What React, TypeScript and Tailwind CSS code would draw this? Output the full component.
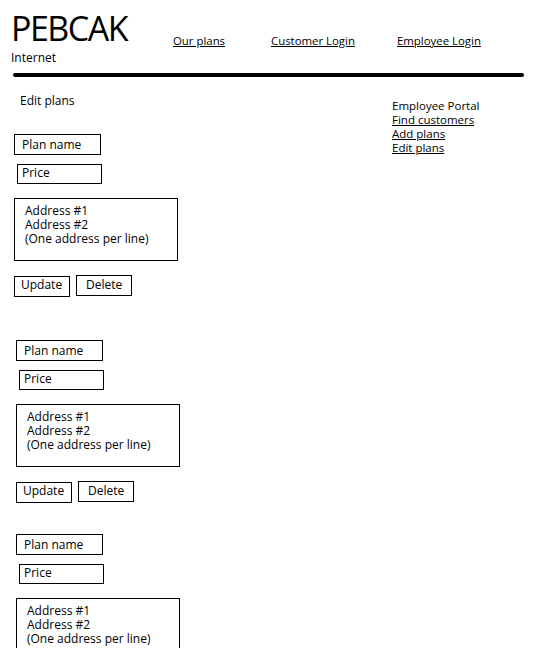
const font = { fontFamily: '"Open Sans", "Noto Sans", sans-serif' };

function PlanEditor({ className }: { className: string }) {
    return (
        <div className={className}>
            <div className="h-[21px] w-[87px] border border-black pl-[7px] pt-[3px] leading-[14px]">Plan name</div>
            <div className="mt-[9px] ml-[3px] h-[20px] w-[85px] border border-black pl-[4px] leading-[15px]">Price</div>
            <div className="mt-[14px] h-[63px] w-[164px] border border-black pl-[10px] pt-[5px] leading-[14px]">
                <div>Address #1</div>
                <div>Address #2</div>
                <div>(One address per line)</div>
            </div>
            <div className="mt-[14px] flex items-start gap-[6px]">
                <div className="mt-[1px] h-[21px] w-[56px] border border-black pl-[6px] leading-[16px]">Update</div>
                <div className="h-[21px] w-[56px] border border-black pl-[9px] leading-[18px]">Delete</div>
            </div>
        </div>
    );
}

export default function App() {
    return (
        <div className="w-[542px] h-[648px] overflow-hidden bg-white text-black text-[12px]" style={font}>
            <header className="flex items-start pl-[11px] pt-[9px]">
                <div className="w-[162px]">
                    <div className="text-[34px] leading-[39px] tracking-[-1.5px]">PEBCAK</div>
                    <div className="mt-[3px] leading-[14px]">Internet</div>
                </div>
                <nav className="mt-[25px] flex text-[11.4px] leading-[14px]">
                    <div className="w-[98px]"><a className="underline">Our plans</a></div>
                    <div className="w-[126px]"><a className="underline">Customer Login</a></div>
                    <div><a className="underline">Employee Login</a></div>
                </nav>
            </header>
            <div className="mx-[13px] mt-[8px] h-[4px] w-[511px] rounded-full bg-black"></div>
            <div className="flex">
                <main className="w-[392px] leading-[14px]">
                    <div className="mt-[17px] pl-[20px]">Edit plans</div>
                    <PlanEditor className="mt-[26px] pl-[14px]" />
                    <PlanEditor className="mt-[43px] pl-[16px]" />
                    <PlanEditor className="mt-[31px] pl-[16px]" />
                </main>
                <aside className="mt-[22px] flex flex-col text-[11.5px] leading-[14px]">
                    <div>Employee Portal</div>
                    <a className="underline">Find customers</a>
                    <a className="underline">Add plans</a>
                    <a className="underline">Edit plans</a>
                </aside>
            </div>
        </div>
    );
}
